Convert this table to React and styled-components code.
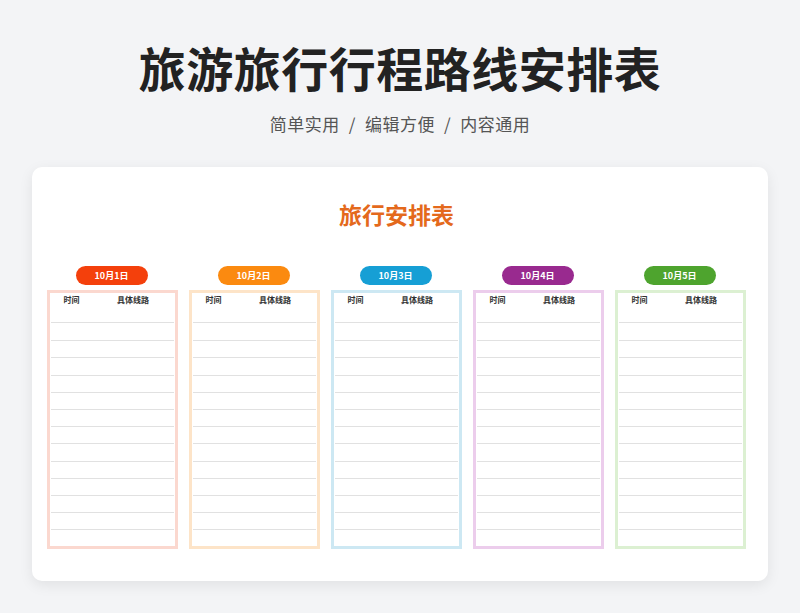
import React from 'react';
import styled, { createGlobalStyle } from 'styled-components';

const days = [
  { label: '10月1日', pill: '#f4400c', border: '#fbd8cf' },
  { label: '10月2日', pill: '#fb8a10', border: '#fde4c8' },
  { label: '10月3日', pill: '#169fd5', border: '#cde8f3' },
  { label: '10月4日', pill: '#992a8f', border: '#eccdec' },
  { label: '10月5日', pill: '#4ea42e', border: '#dcf0d2' },
];

const ROWS = 13;

const Global = createGlobalStyle`
  html, body {
    margin: 0;
    padding: 0;
    background: #f3f4f6;
    font-family: "Noto Sans CJK SC", "Noto Sans", sans-serif;
  }
`;

const Page = styled.div`
  width: 800px;
  height: 613px;
  padding-top: 39px;
  box-sizing: border-box;
  overflow: hidden;
`;

const Title = styled.h1`
  margin: 0;
  text-align: center;
  font-size: 47px;
  line-height: 56px;
  font-weight: 700;
  color: #222;
  letter-spacing: 0.5px;
`;

const Subtitle = styled.p`
  margin: 17px 0 0;
  text-align: center;
  font-size: 17px;
  line-height: 24px;
  color: #555;
  letter-spacing: 0.5px;
  span {
    margin: 0 9px;
  }
`;

const Card = styled.div`
  margin: 31px 32px 0;
  height: 414px;
  box-sizing: border-box;
  background: #fff;
  border-radius: 10px;
  box-shadow: 0 4px 14px rgba(0, 0, 0, 0.08);
  padding: 32px 22px 0 15px;
`;

const CardTitle = styled.h2`
  margin: 0;
  text-align: center;
  font-size: 23px;
  line-height: 30px;
  font-weight: 700;
  color: #e4691c;
`;

const Columns = styled.div`
  margin-top: 37px;
  display: flex;
  gap: 11px;
`;

const Column = styled.div`
  width: 131px;
  display: flex;
  flex-direction: column;
  align-items: center;
`;

const Pill = styled.div`
  width: 72px;
  height: 19px;
  border-radius: 10px;
  background: ${(p) => p.$color};
  color: #fff;
  font-size: 9px;
  font-weight: 700;
  display: flex;
  align-items: center;
  justify-content: center;
  margin-bottom: 5px;
  transform: translateX(-1px);
`;

const Sheet = styled.div`
  width: 100%;
  box-sizing: border-box;
  border: 3px solid ${(p) => p.$color};
  padding: 0 1px;
`;

const Head = styled.div`
  height: 30px;
  display: grid;
  grid-template-columns: 1fr 2fr;
  font-size: 8px;
  font-weight: 700;
  color: #333;
  line-height: 12px;
  padding-top: 1px;
  box-sizing: border-box;
  border-bottom: 1px solid #e1e1e1;
  span {
    text-align: center;
  }
`;

const Row = styled.div`
  height: 17.2px;
  box-sizing: border-box;
  border-top: ${(p) => (p.$first ? 'none' : '1px solid #e1e1e1')};
`;

export default function App() {
  return (
    <Page>
      <Global />
      <Title>旅游旅行行程路线安排表</Title>
      <Subtitle>
        简单实用<span>/</span>编辑方便<span>/</span>内容通用
      </Subtitle>
      <Card>
        <CardTitle>旅行安排表</CardTitle>
        <Columns>
          {days.map((d) => (
            <Column key={d.label}>
              <Pill $color={d.pill}>{d.label}</Pill>
              <Sheet $color={d.border}>
                <Head>
                  <span>时间</span>
                  <span>具体线路</span>
                </Head>
                {Array.from({ length: ROWS }).map((_, i) => (
                  <Row key={i} $first={i === 0} />
                ))}
              </Sheet>
            </Column>
          ))}
        </Columns>
      </Card>
    </Page>
  );
}
